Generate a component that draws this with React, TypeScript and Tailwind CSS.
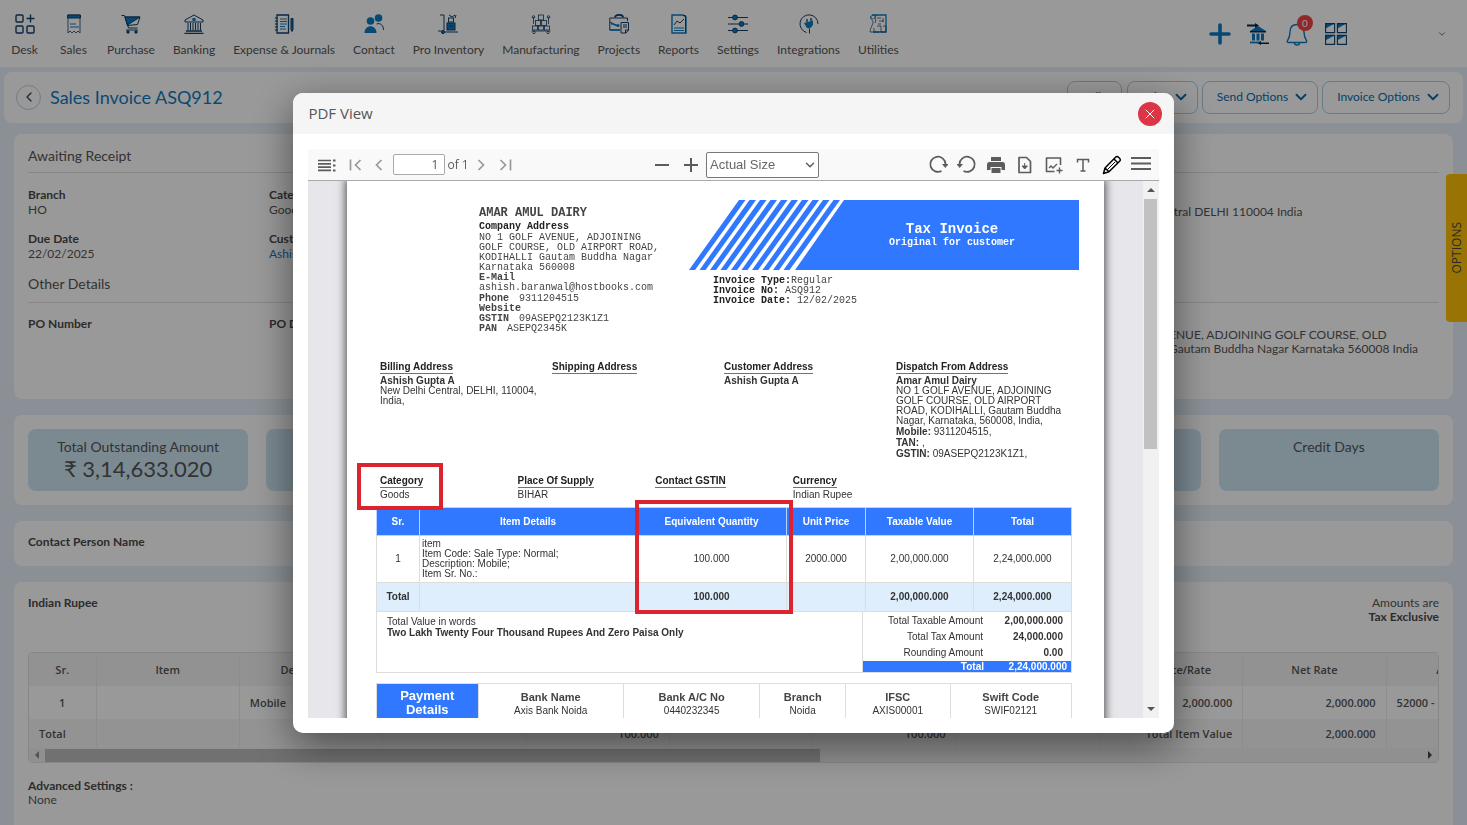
import type { ReactNode } from "react";
import { ChevronDown, ChevronLeft, X } from "lucide-react";
import { clsx } from "clsx";

const BLUE = "#0b7cc1";
const NAVY = "#12406b";

type IconProps = { children: ReactNode; size?: number };

function NavGlyph({ children, size = 20 }: IconProps) {
  return (
    <svg
      aria-hidden="true"
      width={size}
      height={size}
      viewBox="0 0 20 20"
      fill="none"
      stroke={NAVY}
      strokeWidth="1"
    >
      {children}
    </svg>
  );
}

const navItems: { label: string; icon: ReactNode }[] = [
  {
    label: "Desk",
    icon: (
      <NavGlyph>
        <g strokeWidth="1.4">
          <rect x="1" y="1" width="7" height="7" rx="1" />
          <rect x="1" y="12" width="7" height="7" rx="1" />
          <rect x="12" y="12" width="7" height="7" rx="1" />
          <path d="M15.500 0.500v8M11.500 4.500h8" />
        </g>
      </NavGlyph>
    ),
  },
  {
    label: "Sales",
    icon: (
      <NavGlyph>
        <path d="M4 1h12v18l-2-2-2 2-2-2-2 2-2-2-2 2z" strokeWidth="0.800" />
        <path d="M3.500 1h13v3h-13z" fill={BLUE} />
        <path d="M6 10h6M6 13h9" stroke={BLUE} />
      </NavGlyph>
    ),
  },
  {
    label: "Purchase",
    icon: (
      <NavGlyph>
        <path d="M0.500 1.500h3l4 12.500h9" />
        <path d="M4 3h15l-2.500 7.500-10 1z" />
        <path d="M4 3h15L6.500 11z" fill={BLUE} />
        <path d="M5 16h12" />
        <circle cx="7" cy="18" r="1.200" fill={NAVY} />
        <circle cx="15" cy="18" r="1.200" fill={NAVY} />
      </NavGlyph>
    ),
  },
  {
    label: "Banking",
    icon: (
      <NavGlyph>
        <path d="M1 8l0-2 9-5 9 5v2z" />
        <circle cx="10" cy="5.500" r="1.800" fill={BLUE} stroke="none" />
        <path d="M4 9v7M6.500 9v7M9 9v7M11.500 9v7M14 9v7M16.500 9v7" />
        <path d="M2 17h16M0.500 19.300h19" strokeWidth="1.300" />
      </NavGlyph>
    ),
  },
  {
    label: "Expense & Journals",
    icon: (
      <NavGlyph>
        <path d="M3 1h11.500v18H3z" strokeWidth="1.300" />
        <path d="M0.800 4h3M0.800 7h3M0.800 10h3M0.800 13h3M0.800 16h3" />
        <path d="M6 5h7M6 7.500h7M6 10h7M6 12.500h5M6 15h6" stroke={BLUE} />
        <path d="M17 4.500h2v11l-1 2-1-2z" fill={BLUE} />
      </NavGlyph>
    ),
  },
  {
    label: "Contact",
    icon: (
      <NavGlyph>
        <circle cx="14.500" cy="4" r="3.800" fill={BLUE} stroke="none" />
        <circle cx="6.500" cy="7" r="3.800" fill={BLUE} stroke="none" />
        <path d="M0.500 19c0-9 12-9 12 0z" fill={BLUE} stroke="none" />
        <path d="M12.500 10c4-1.500 7 1.500 7 6" />
      </NavGlyph>
    ),
  },
  {
    label: "Pro Inventory",
    icon: (
      <NavGlyph>
        <path d="M2 1h4v15M0 17h3M7 18h13" />
        <circle cx="5" cy="18" r="1.600" fill={BLUE} />
        <rect x="9" y="9" width="8" height="7" fill={BLUE} />
        <rect x="10.500" y="4" width="5" height="4" />
        <path d="M11 1l3 2 3-2M17 4l1-3M11 12h4" />
      </NavGlyph>
    ),
  },
  {
    label: "Manufacturing",
    icon: (
      <NavGlyph>
        <g strokeWidth="0.800">
          <rect x="7.500" y="1" width="5" height="5" />
          <rect x="4.500" y="6.500" width="5" height="5" />
          <rect x="10.500" y="6.500" width="5" height="5" />
          <rect x="1.500" y="12" width="5" height="4" />
          <rect x="7.500" y="12" width="5" height="4" />
          <rect x="13.500" y="12" width="5" height="4" />
          <path d="M0.500 17h19M2.500 10V3M17.500 10V3" />
          <circle cx="2.500" cy="3" r="1.300" />
          <circle cx="17.500" cy="3" r="1.300" />
          <circle cx="3" cy="18.500" r="1.200" />
          <circle cx="17" cy="18.500" r="1.200" />
        </g>
      </NavGlyph>
    ),
  },
  {
    label: "Projects",
    icon: (
      <NavGlyph>
        <path d="M11 16H0.800V4h17.700v3M0.800 8l8 4" />
        <path d="M6 3.500c0-3.500 8-3.500 8 0" strokeWidth="1.800" />
        <path d="M0.800 16h10M2 9.500l6 2" stroke={BLUE} strokeWidth="1.500" />
        <circle cx="9" cy="11.500" r="1.500" fill={BLUE} stroke="none" />
        <path d="M12 8.500h7.500V16L17 19h-5z" />
        <path d="M14 11h4M14 13h4M16.500 19v-3h3" />
      </NavGlyph>
    ),
  },
  {
    label: "Reports",
    icon: (
      <NavGlyph>
        <path d="M3 1h11l3 2v16H3z" stroke={BLUE} strokeWidth="1.400" />
        <path d="M14 1.500h2.500v17" />
        <path d="M5 11l3-4 3 2 4-4" />
        <path d="M5 14h10M5 16.500h10" stroke={BLUE} />
      </NavGlyph>
    ),
  },
  {
    label: "Settings",
    icon: (
      <NavGlyph>
        <path d="M0 3.500h20M0 10h20M0 16.500h20" />
        <circle cx="7" cy="3.500" r="2.400" fill={BLUE} />
        <circle cx="13.500" cy="10" r="2.400" fill={BLUE} />
        <circle cx="7" cy="16.500" r="2.400" fill={BLUE} />
      </NavGlyph>
    ),
  },
  {
    label: "Integrations",
    icon: (
      <NavGlyph>
        <path d="M7.500 18.500A9 9 0 1 1 19 10M10.500 19.500v-5" />
        <path d="M5 9l9-2.500v4c-1 4-6 5-7 2z" fill={BLUE} stroke="none" />
        <path d="M8 8V5M12 7V4" strokeWidth="1.300" />
      </NavGlyph>
    ),
  },
  {
    label: "Utilities",
    icon: (
      <NavGlyph>
        <g strokeWidth="0.700">
          <path d="M4 1h14v17H5" stroke={BLUE} strokeWidth="1.300" />
          <path d="M3 2c-2 3 3 4 2 7s-3 6-3 9h9M8 1c-2 3 1 5-1 8" />
          <circle cx="5" cy="3" r="2" stroke={BLUE} />
          <path d="M9 4h4M13 10h-3M9 12h4v6h5v-6h-3M15 4v4M6 14v3M11 7h5" />
        </g>
      </NavGlyph>
    ),
  },
];

function TopNav() {
  return (
    <header className="flex h-[67px] shrink-0 items-center justify-between bg-white pr-5">
      <nav className="flex pt-1">
        {navItems.map((item) => (
          <a
            key={item.label}
            href="#"
            className="flex min-w-[49px] flex-col items-center gap-2 px-[9px] text-xs leading-4 whitespace-nowrap text-[#555]"
          >
            {item.icon}
            {item.label}
          </a>
        ))}
      </nav>
      <div className="flex items-center gap-4">
        <button type="button" aria-label="Add">
          <svg width="22" height="22" viewBox="0 0 22 22" stroke={BLUE} strokeWidth="3.600" strokeLinecap="round">
            <path d="M11 2v18M2 11h18" />
          </svg>
        </button>
        <button type="button" aria-label="Bank transfer">
          <svg width="22" height="22" viewBox="0 0 22 22">
            <path d="M11 3l8 5H3z" fill={BLUE} />
            <path d="M3 8h16v1.500H3zM0 1.500h8V0l4 2.500-4 2.500V3.500H0zM22 19.500h-8V18l-4 2 4 2v-1h8z" fill="#0d2645" />
            <path d="M5 10.500h3v7H5zM9.500 10.500h3v7h-3zM14 10.500h3v7h-3z" fill={BLUE} />
            <path d="M3 19.500h9" stroke={BLUE} strokeWidth="1.800" />
          </svg>
        </button>
        <button type="button" aria-label="Notifications" className="relative">
          <svg width="24" height="24" viewBox="0 0 24 24" fill="none" stroke={BLUE} strokeWidth="1.400">
            <path d="M12 2.500c-5 0-7 3.500-7 7.500 0 5-1.500 7-2.500 8.500-.6 1 0 2 1 2h17c1 0 1.600-1 1-2C20.500 17 19 15 19 10c0-4-2-7.500-7-7.500zM9.500 21a2.500 2 0 0 0 5 0" />
          </svg>
          <span className="absolute -top-[7px] left-3 flex size-4 items-center justify-center rounded-full bg-[#f04347] text-[10px] leading-4 text-white">
            0
          </span>
        </button>
        <button type="button" aria-label="Apps">
          <svg width="22" height="22" viewBox="0 0 22 22" fill="none" stroke={NAVY} strokeWidth="1.100">
            <path d="M.6.600h9L.6 5.500zM12.400.600h9l-9 4.900zM.6 12.400h9l-9 4.900zM12.400 12.400h9l-9 4.900z" fill={BLUE} stroke="none" />
            <path d="M.6.600h9v9h-9zM12.400.600h9v9h-9zM.6 12.400h9v9h-9zM12.400 12.400h9v9h-9z" />
          </svg>
        </button>
        <button type="button" aria-label="Account" className="ml-[74px]">
          <ChevronDown aria-hidden="true" size={10} className="text-[#555]" />
        </button>
      </div>
    </header>
  );
}

function OutlineButton({ label, hasMenu = true }: { label: string; hasMenu?: boolean }) {
  return (
    <button
      type="button"
      className={clsx(
        "flex h-[33px] items-center gap-1 rounded-lg border border-[#a9cfe6] text-xs text-[#0b6ba8]",
        hasMenu ? "pr-[7px] pl-[14px]" : "mr-px w-[55px] justify-center",
      )}
    >
      {label}
      {hasMenu ? <ChevronDown aria-hidden="true" size={18} strokeWidth={2.5} /> : null}
    </button>
  );
}

function Field({ label, value, isLink = false }: { label: string; value?: string; isLink?: boolean }) {
  return (
    <div className="h-11 text-xs leading-[15px]">
      <div className="font-bold text-[#4a4a4a]">{label}</div>
      {isLink ? (
        <a href="#" className="text-[#127bc0]">
          {value}
        </a>
      ) : (
        <div className="text-[#555]">{value}</div>
      )}
    </div>
  );
}

const tiles = [
  { id: "outstanding", label: "Total Outstanding Amount", value: "₹ 3,14,633.020" },
  { id: "received" },
  { id: "credit" },
  { id: "debit" },
  { id: "overdue" },
  { id: "days", label: "Credit Days" },
];

const itemHeads = ["Sr.", "Item", "Description", "HSN/SAC", "Quantity", "Unit", "Base Quantity", "Base Unit", "Unit Price/Rate", "Net Rate", "Account"];
const itemCells = ["1", "", "Mobile", "", "100.000", "", "100.000", "", "2,000.000", "2,000.000", "52000 -"];
const itemTotals = ["Total", "", "", "", "100.000", "", "100.000", "", "Total Item Value", "2,000.000", ""];

function ItemTable() {
  return (
    <div className="overflow-hidden rounded border border-[#e2e2e2]">
      <table className="w-[1501px] table-fixed border-collapse font-['Open_Sans',sans-serif] text-[11px] font-semibold text-[#555]">
        <colgroup>
          <col className="w-[67px]" />
          {itemHeads.slice(1).map((head) => (
            <col key={head} />
          ))}
        </colgroup>
        <thead className="bg-[#f4f4f4]">
          <tr className="h-[33px]">
            {itemHeads.map((head) => (
              <th key={head} className="border-r border-[#ececec] text-center font-semibold">
                {head}
              </th>
            ))}
          </tr>
        </thead>
        <tbody>
          <tr className="h-[33px]">
            {itemCells.map((cell, index) => (
              <td
                key={itemHeads[index]}
                className={clsx(
                  "border-r border-[#ececec] px-[10px] whitespace-nowrap",
                  index === 0 ? "text-center" : index === 2 || index === 10 ? "text-left" : "text-right",
                )}
              >
                {cell}
              </td>
            ))}
          </tr>
          <tr className="h-[29px] bg-[#f6f6f6]">
            {itemTotals.map((cell, index) => (
              <td
                key={itemHeads[index]}
                className={clsx("border-r border-[#ececec] px-[10px] whitespace-nowrap", index === 0 ? "text-left" : "text-right")}
              >
                {cell}
              </td>
            ))}
          </tr>
        </tbody>
      </table>
      <div className="flex h-[14px] items-center bg-[#f1f1f1]">
        <span className="mx-[6px] border-y-4 border-r-4 border-y-transparent border-r-[#8a8a8a]" />
        <span className="h-[13px] w-[55%] bg-[#bdbdbd]" />
        <span className="mr-[6px] ml-auto border-y-4 border-l-4 border-y-transparent border-l-[#444]" />
      </div>
    </div>
  );
}

function InvoicePage() {
  return (
    <div className="flex h-screen flex-col overflow-hidden bg-[#e6f0f8]">
      <TopNav />
      <div className="mx-1 mt-[5px] flex h-[51px] shrink-0 items-center justify-between rounded-lg bg-white px-3 pb-px">
        <div className="flex items-center gap-[9px]">
          <button
            type="button"
            aria-label="Back"
            className="flex size-[25px] items-center justify-center rounded-full border border-[#b8d3e6] text-[#444]"
          >
            <ChevronLeft aria-hidden="true" size={16} />
          </button>
          <h1 className="text-lg text-[#127bc0]">Sales Invoice ASQ912</h1>
        </div>
        <div className="flex gap-1 pr-px">
          <OutlineButton label="Edit" hasMenu={false} />
          <OutlineButton label="Print" />
          <OutlineButton label="Send Options" />
          <OutlineButton label="Invoice Options" />
        </div>
      </div>

      <main className="flex min-h-0 flex-1 flex-col gap-4 px-[14px] pt-[11px]">
        <section className="h-[265px] shrink-0 rounded-lg bg-white px-[14px] pt-3 text-[#555]">
          <h2 className="border-b border-[#e0e0e0] pb-[6px] text-sm leading-5">Awaiting Receipt</h2>
          <div className="flex h-[101px] pt-[14px]">
            <div className="grid w-[723px] shrink-0 grid-cols-3 content-start">
              <Field label="Branch" value="HO" />
              <Field label="Category" value="Goods" />
              <span />
              <Field label="Due Date" value="22/02/2025" />
              <Field label="Customer" value="Ashish Gupta A" isLink />
            </div>
            <div className="pt-[18px] pl-[260px] text-xs leading-[14px] whitespace-nowrap">
              Ashish Gupta A New Delhi Central DELHI 110004 India
            </div>
          </div>
          <h2 className="border-b border-[#e0e0e0] pb-2 text-sm leading-5">Other Details</h2>
          <div className="flex pt-[13px]">
            <div className="grid w-[723px] shrink-0 grid-cols-3">
              <Field label="PO Number" />
              <Field label="PO Date" />
            </div>
            <div className="pt-3 pl-[260px] text-xs leading-[14px] whitespace-nowrap">
              AMUL DAIRY, NO 1 GOLF AVENUE, ADJOINING GOLF COURSE, OLD
              <br />
              AIRPORT ROAD, KODIHALLI Gautam Buddha Nagar Karnataka 560008 India
            </div>
          </div>
        </section>

        <section className="grid shrink-0 grid-cols-6 gap-[18px] rounded-lg bg-white px-[14px] py-[14px]">
          {tiles.map((tile) => (
            <div key={tile.id} className="h-[62px] rounded-lg bg-[#cde5f2] pt-2 text-center text-[#555]">
              <div className="text-sm leading-5">{tile.label}</div>
              <div className="text-[22px] leading-6">{tile.value}</div>
            </div>
          ))}
        </section>

        <section className="h-[45px] shrink-0 rounded-lg bg-white px-[14px] text-xs leading-[42px] font-bold text-[#4a4a4a]">
          Contact Person Name
        </section>

        <section className="min-h-0 flex-1 rounded-t-lg bg-white px-[14px] pt-[14px] text-xs leading-[14px] text-[#555]">
          <div className="flex h-14 justify-between">
            <div className="font-bold text-[#4a4a4a]">Indian Rupee</div>
            <div className="text-right">
              Amounts are
              <div className="font-bold text-[#4a4a4a]">Tax Exclusive</div>
            </div>
          </div>
          <ItemTable />
          <div className="pt-4">
            <div className="font-bold text-[#4a4a4a]">Advanced Settings :</div>
            None
          </div>
        </section>
      </main>

      <button
        type="button"
        className="fixed top-[174px] right-0 flex h-[148px] w-[21px] items-center justify-center rounded-l bg-[#ffc107] font-['Open_Sans',sans-serif] text-xs text-[#444]"
      >
        <span className="rotate-180 [writing-mode:vertical-rl]">OPTIONS</span>
      </button>
    </div>
  );
}

type ToolProps = { label: string; children: ReactNode; muted?: boolean; dark?: boolean };

function Tool({ label, children, muted = false, dark = false }: ToolProps) {
  return (
    <button type="button" aria-label={label} className={clsx(muted ? "text-[#999]" : dark ? "text-black" : "text-[#5c5c5c]")}>
      <svg width="20" height="20" viewBox="0 0 20 20" fill="none" stroke="currentColor" strokeWidth="2">
        {children}
      </svg>
    </button>
  );
}

function Toolbar() {
  return (
    <div className="flex h-8 items-center justify-between border-b border-[#aaa] bg-[#f9f9f9] pt-px pr-2 pl-[9px] font-['Open_Sans',sans-serif] text-xs text-[#5c5c5c]">
      <div className="flex items-center gap-1">
        <Tool label="Toggle sidebar">
          <path d="M1 5.500h13M1 8.800h13M1 12.100h13M1 15.400h13" strokeWidth="1.700" />
          <path d="M16 5.500h2.500M16 10.500h2.500M16 15.500h2.500" />
        </Tool>
        <div className="flex gap-1 pl-1">
          <Tool label="First page" muted>
            <path d="M5.500 4.500v11M15.500 5l-5 5 5 5" strokeWidth="1.700" />
          </Tool>
          <Tool label="Previous page" muted>
            <path d="M12.500 5l-5 5 5 5" strokeWidth="1.700" />
          </Tool>
        </div>
        <label className="flex items-center gap-[2px] whitespace-nowrap">
          <input
            aria-label="Page"
            defaultValue="1"
            className="h-[21px] w-[52px] rounded-[2px] border border-[#aaa] bg-white pr-[6px] text-right text-xs text-[#555]"
          />
          of 1
        </label>
        <div className="-ml-px flex gap-1">
          <Tool label="Next page" muted>
            <path d="M6.500 5l5 5-5 5" strokeWidth="1.700" />
          </Tool>
          <Tool label="Last page" muted>
            <path d="M4.500 5l5 5-5 5M14.500 4.500v11" strokeWidth="1.700" />
          </Tool>
        </div>
      </div>
      <div className="flex items-center gap-[9px] pl-7">
        <Tool label="Zoom out">
          <path d="M3 10h14" />
        </Tool>
        <Tool label="Zoom in">
          <path d="M3 10h14M10 3v14" />
        </Tool>
        <div className="relative -ml-1 flex items-center">
          <select
            aria-label="Zoom"
            className="h-[26px] w-[113px] appearance-none rounded-[2px] border border-[#777] bg-white pl-[3px] font-['Liberation_Sans',sans-serif] text-[13px] text-[#666]"
          >
            <option>Actual Size</option>
          </select>
          <ChevronDown aria-hidden="true" size={14} strokeWidth={2.5} className="pointer-events-none absolute right-[2px]" />
        </div>
      </div>
      <div className="flex items-center gap-[9px]">
        <Tool label="Rotate clockwise">
          <path d="M13.500 16A7.600 7.600 0 1 1 17.500 9" strokeWidth="1.800" />
          <path d="M14 9h6.500l-3.200 4z" fill="currentColor" stroke="none" />
        </Tool>
        <Tool label="Rotate counterclockwise">
          <path d="M6.500 16A7.600 7.600 0 1 0 2.500 9" strokeWidth="1.800" />
          <path d="M6 9H-.5l3.200 4z" fill="currentColor" stroke="none" />
        </Tool>
        <Tool label="Print">
          <path d="M5 2h10v4H5zM3.500 7h13a2.500 2.500 0 0 1 2.500 2.500V15h-3.500v-3h-11v3H1V9.500A2.500 2.500 0 0 1 3.500 7zM5.500 13h9v5h-9z" fill="currentColor" stroke="none" />
        </Tool>
        <Tool label="Download">
          <path d="M4 2.500h7.500l4 4V17.500H4z" strokeWidth="1.700" strokeLinejoin="round" />
          <path d="M9.700 8v5M7 11l2.700 3 2.700-3z" fill="currentColor" strokeWidth="1" />
        </Tool>
        <Tool label="Add image">
          <path d="M16.500 10V3H2.500v13.500h8" strokeWidth="1.600" strokeLinejoin="round" />
          <path d="M5 13l2-2 2 2 4-4M12.500 15.500h6M15.500 12.500v6" strokeWidth="1.400" />
        </Tool>
        <Tool label="Add text">
          <path d="M4.500 7.500V4.500h11v3M10 4.500v11.500M7.500 16h5" strokeWidth="1.500" />
        </Tool>
        <Tool label="Draw" dark>
          <path
            d="M1.500 18.500l1.500-5.500L13.500 2.200a2 2 0 0 1 3 0l1.100 1.100a2 2 0 0 1 0 3L7 16.800zM3 13l4 3.800M12 4l4 4"
            strokeWidth="1.500"
            strokeLinejoin="round"
          />
          <path d="M5.500 14.500l7.500-7.500" strokeWidth="1" />
        </Tool>
        <Tool label="More">
          <path d="M0 3h20M0 8.500h20M0 14h20" strokeWidth="1.800" />
        </Tool>
      </div>
    </div>
  );
}

function AddressBlock({ title, children }: { title: string; children?: ReactNode }) {
  return (
    <div>
      <div className="mb-[3px]">
        <span className="border-b border-[#2f78ff] pb-px font-bold text-[#222]">{title}</span>
      </div>
      {children}
    </div>
  );
}

const stripes = Array.from({ length: 10 }, (_, index) => index * 10.5);

function InvoiceHeader() {
  return (
    <div className="flex justify-between pt-[19px] pr-[25px] pl-[132px] font-['Liberation_Mono',monospace] text-[10px] leading-[10px] text-[#444]">
      <div className="w-[185px] pt-[6px]">
        <div className="text-xs leading-[14px] font-bold">AMAR AMUL DAIRY</div>
        <div className="pt-[2px] font-bold text-[#222]">Company Address</div>
        <p className="pt-px">NO 1 GOLF AVENUE, ADJOINING GOLF COURSE, OLD AIRPORT ROAD, KODIHALLI Gautam Buddha Nagar Karnataka 560008</p>
        <div className="font-bold">E-Mail</div>
        <div>ashish.baranwal@hostbooks.com</div>
        <div className="pt-px">
          <b className="mr-[10px]">Phone</b>9311204515
        </div>
        <div className="font-bold">Website</div>
        <div>
          <b className="mr-[10px]">GSTIN</b>09ASEPQ2123K1Z1
        </div>
        <div>
          <b className="mr-[10px]">PAN</b>ASEPQ2345K
        </div>
      </div>
      <div className="w-[390px]">
        <div className="relative h-[70px]">
          <svg aria-hidden="true" className="size-full" viewBox="0 0 390 70">
            <path d="M155 0H390V70H106z" fill="#2f78ff" />
            {stripes.map((x) => (
              <path key={x} d={`M${50 + x} 0h6.500L${6 + x} 70H${x}z`} fill="#2f78ff" />
            ))}
          </svg>
          <div className="absolute inset-y-0 right-0 flex w-[254px] flex-col justify-center text-center font-bold text-white">
            <div className="text-sm leading-[16px]">Tax Invoice</div>
            <div className="leading-3">Original for customer</div>
          </div>
        </div>
        <div className="pt-[6px] pl-6">
          <div>
            <b className="text-[#222]">Invoice Type:</b>Regular
          </div>
          <div>
            <b className="text-[#222]">Invoice No:</b> ASQ912
          </div>
          <div>
            <b className="text-[#222]">Invoice Date:</b> 12/02/2025
          </div>
        </div>
      </div>
    </div>
  );
}

function LineTable() {
  return (
    <div className="relative">
      <table className="w-full table-fixed border-collapse text-center">
        <colgroup>
          <col className="w-[43px]" />
          <col className="w-[217px]" />
          <col className="w-[150px]" />
          <col className="w-[79px]" />
          <col className="w-[108px]" />
          <col />
        </colgroup>
        <thead>
          <tr className="h-7 bg-[#2f78ff] text-white [&>th]:border [&>th]:border-[#b9d2ff]">
            <th>Sr.</th>
            <th>Item Details</th>
            <th>Equivalent Quantity</th>
            <th>Unit Price</th>
            <th>Taxable Value</th>
            <th>Total</th>
          </tr>
        </thead>
        <tbody className="[&_td]:border [&_td]:border-[#ddd]">
          <tr className="h-[47px]">
            <td>1</td>
            <td className="pl-[2px] text-left leading-[10px]">
              item
              <br />
              Item Code: Sale Type: Normal;
              <br />
              Description: Mobile;
              <br />
              Item Sr. No.:
            </td>
            <td>100.000</td>
            <td>2000.000</td>
            <td>2,00,000.000</td>
            <td>2,24,000.000</td>
          </tr>
          <tr className="h-[29px] bg-[#dfeefd] font-bold">
            <td>Total</td>
            <td />
            <td>100.000</td>
            <td />
            <td>2,00,000.000</td>
            <td>2,24,000.000</td>
          </tr>
        </tbody>
      </table>
      <div className="pointer-events-none absolute -top-[7px] left-[259px] h-[114px] w-[158px] border-4 border-[#dc2430]" />
    </div>
  );
}

const sums = [
  { label: "Total Taxable Amount", value: "2,00,000.000" },
  { label: "Total Tax Amount", value: "24,000.000" },
  { label: "Rounding Amount", value: "0.00" },
];

const bank = [
  { head: "Bank Name", value: "Axis Bank Noida", width: "w-[146px]" },
  { head: "Bank A/C No", value: "0440232345", width: "w-[137px]" },
  { head: "Branch", value: "Noida", width: "w-[86px]" },
  { head: "IFSC", value: "AXIS00001", width: "w-[105px]" },
  { head: "Swift Code", value: "SWIF02121", width: "w-[122px]" },
];

function PdfSheet() {
  return (
    <div className="h-[1000px] w-[757px] shrink-0 bg-white font-['Liberation_Sans',sans-serif] text-[10px] leading-[11px] text-[#333] shadow-[0_0_8px_2px_rgba(0,0,0,0.6)]">
      <InvoiceHeader />
      <div className="grid h-[116px] grid-cols-4 pt-[27px] pr-9 pl-[33px]">
        <AddressBlock title="Billing Address">
          <b>Ashish Gupta A</b>
          <p className="pr-1 leading-[10px]">New Delhi Central, DELHI, 110004, India,</p>
        </AddressBlock>
        <AddressBlock title="Shipping Address" />
        <AddressBlock title="Customer Address">
          <b>Ashish Gupta A</b>
        </AddressBlock>
        <AddressBlock title="Dispatch From Address">
          <b>Amar Amul Dairy</b>
          <p className="leading-[10px]">NO 1 GOLF AVENUE, ADJOINING GOLF COURSE, OLD AIRPORT ROAD, KODIHALLI, Gautam Buddha Nagar, Karnataka, 560008, India,</p>
          <div>
            <b>Mobile:</b> 9311204515,
          </div>
          <div>
            <b>TAN:</b> ,
          </div>
          <div>
            <b>GSTIN:</b> 09ASEPQ2123K1Z1,
          </div>
        </AddressBlock>
      </div>
      <div className="relative grid h-[57px] grid-cols-5 pt-[25px] pr-9 pl-[33px]">
        <AddressBlock title="Category">Goods</AddressBlock>
        <AddressBlock title="Place Of Supply">BIHAR</AddressBlock>
        <AddressBlock title="Contact GSTIN" />
        <AddressBlock title="Currency">Indian Rupee</AddressBlock>
        <div className="pointer-events-none absolute top-[13px] left-[10px] z-10 h-[47px] w-[86px] border-4 border-[#dc2430]" />
      </div>
      <div className="pr-8 pl-[29px]">
        <LineTable />
        <div className="flex border border-t-0 border-[#ddd]">
          <div className="flex-1 pt-1 pl-[10px]">
            Total Value in words
            <div className="font-bold">Two Lakh Twenty Four Thousand Rupees And Zero Paisa Only</div>
          </div>
          <div className="w-[209px] border-l border-[#ddd] pt-px text-right">
            {sums.map((sum) => (
              <div key={sum.label} className="flex h-4 items-center justify-end pr-2">
                {sum.label}
                <b className="w-20">{sum.value}</b>
              </div>
            ))}
            <div className="flex h-[11px] justify-end bg-[#2f78ff] pr-1 font-bold text-white">
              Total
              <span className="w-[83px]">2,24,000.000</span>
            </div>
          </div>
        </div>
        <div className="mt-[10px] flex border border-[#ddd] text-center">
          <div className="w-[101px] bg-[#2f78ff] pt-[5px] text-[13px] leading-[14px] font-bold text-white">
            Payment
            <br />
            Details
          </div>
          {bank.map((entry) => (
            <div key={entry.head} className={clsx(entry.width, "h-12 border-l border-[#ddd] pt-[7px]")}>
              <div className="text-[11px] leading-[13px] font-bold text-[#444]">{entry.head}</div>
              <div className="leading-[14px]">{entry.value}</div>
            </div>
          ))}
        </div>
      </div>
    </div>
  );
}

function PdfModal() {
  return (
    <div className="fixed inset-0 z-50 flex items-center justify-center bg-black/40" role="presentation">
      <div
        role="dialog"
        aria-modal="true"
        aria-label="PDF View"
        className="flex h-[640px] w-3/5 flex-col overflow-hidden rounded-[10px] bg-white shadow-[0_12px_40px_rgba(0,0,0,0.5)]"
      >
        <div className="flex h-[41px] shrink-0 items-center justify-between bg-[#f5f5f5] pt-px pr-3 pl-[15px]">
          <h2 className="font-['Open_Sans',sans-serif] text-[15px] text-[#555]">PDF View</h2>
          <button type="button" aria-label="Close" className="flex size-6 items-center justify-center rounded-full bg-[#dc3545] text-white">
            <X aria-hidden="true" size={16} strokeWidth={1.5} />
          </button>
        </div>
        <div className="flex min-h-0 flex-1 flex-col p-[15px]">
          <Toolbar />
          <div className="flex min-h-0 flex-1 bg-[#e7e6eb]">
            <div className="flex min-w-0 flex-1 justify-center overflow-hidden">
              <PdfSheet />
            </div>
            <div className="flex w-4 flex-col items-center bg-[#f1f1f1]">
              <span className="my-[7px] border-x-4 border-b-4 border-x-transparent border-b-[#555]" />
              <span className="h-[250px] w-[13px] bg-[#c1c1c1]" />
              <span className="mt-auto mb-[7px] border-x-4 border-t-4 border-x-transparent border-t-[#555]" />
            </div>
          </div>
        </div>
      </div>
    </div>
  );
}

export default function App() {
  return (
    <div className="font-['Lato','Noto_Sans',sans-serif]">
      <InvoicePage />
      <PdfModal />
    </div>
  );
}
